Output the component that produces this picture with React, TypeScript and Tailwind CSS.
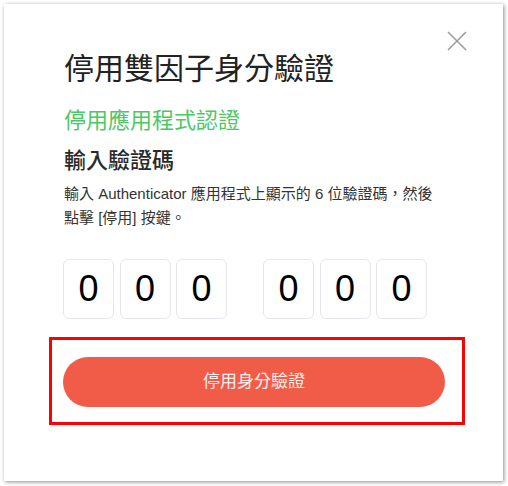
import React from "react";

const font = { fontFamily: '"Liberation Sans", "Noto Sans CJK TC", sans-serif' };

export default function App() {
  const digits = ["0", "0", "0"];
  return (
    <div className="w-[508px] h-[486px] bg-white pl-[4px] pt-[4px]" style={font}>
      <div className="relative w-[499px] h-[477px] bg-white shadow-[1px_1px_4px_rgba(0,0,0,0.45)]">
        <button className="absolute left-[443px] top-[27px] w-[20px] h-[20px] flex items-center justify-center">
          <svg width="20" height="20" viewBox="0 0 20 20">
            <path d="M1 1 L19 19 M19 1 L1 19" stroke="#9a9a9a" strokeWidth="1.5" fill="none" />
          </svg>
        </button>
        <div className="flex flex-col pl-[60px] pt-[47px] w-[442px]">
          <h1 className="text-[30px] leading-[36px] text-[#222] font-normal">停用雙因子身分驗證</h1>
          <h2 className="mt-[20px] text-[22px] leading-[28px] text-[#4cc764]">停用應用程式認證</h2>
          <h3 className="mt-[12px] text-[22px] leading-[28px] text-[#2a2a2a] font-medium">輸入驗證碼</h3>
          <p className="mt-[7px] text-[15px] leading-[24px] text-[#333]">
            輸入 Authenticator 應用程式上顯示的 6 位驗證碼，然後
            <br />
            點擊 [停用] 按鍵。
          </p>
          <div className="mt-[29px] flex gap-[36px] -ml-[1px]">
            {[0, 1].map((g) => (
              <div key={g} className="flex gap-[5.5px]">
                {digits.map((d, i) => (
                  <div
                    key={i}
                    className="w-[51px] h-[60px] rounded-[6px] border border-[#e6e6ee] flex items-center justify-center text-[36px] text-black"
                  >
                    {d}
                  </div>
                ))}
              </div>
            ))}
          </div>
          <button className="mt-[38px] w-[382px] h-[50px] rounded-full bg-[#f15c49] text-white/90 text-[17px] -ml-[1px]">
            停用身分驗證
          </button>
        </div>
        <div className="absolute left-[45px] top-[333px] w-[416px] h-[88px] border-[3px] border-[#ff0000] pointer-events-none" />
      </div>
    </div>
  );
}
